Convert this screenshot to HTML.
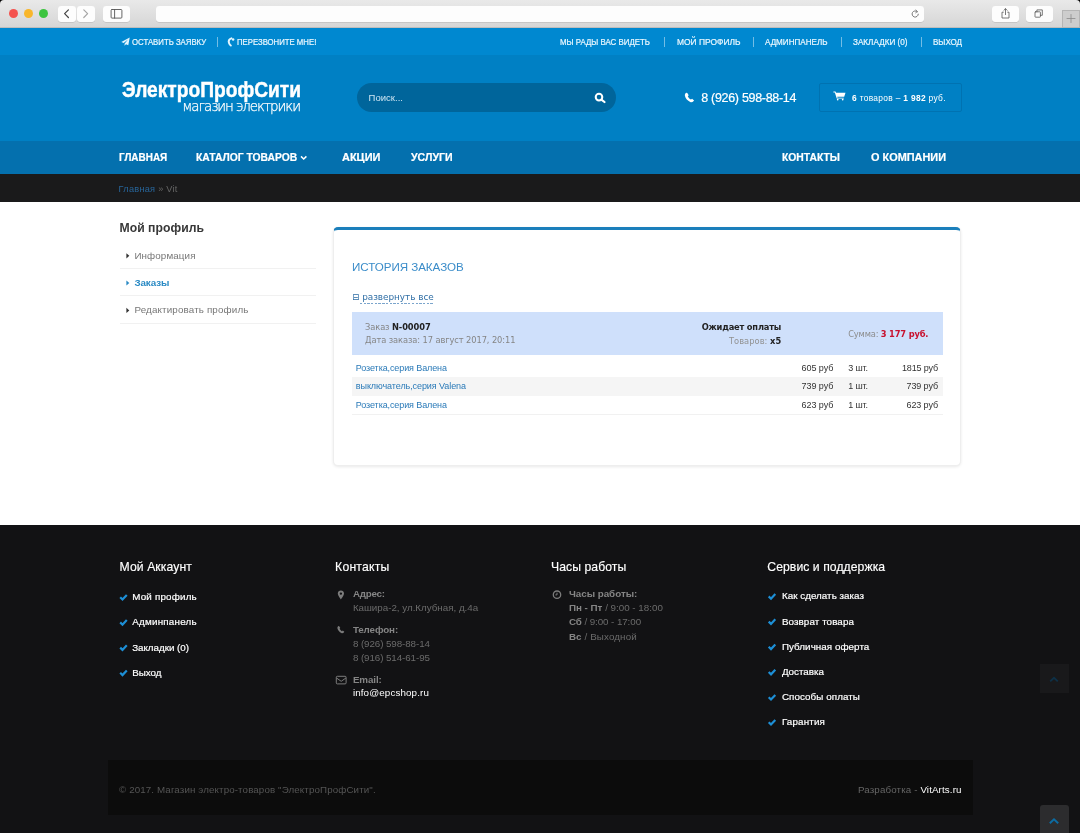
<!DOCTYPE html>
<html lang="ru">
<head>
<meta charset="utf-8">
<title>ЭлектроПрофСити — История заказов</title>
<style>
html,body{margin:0;padding:0}
body{width:1080px;height:833px;overflow:hidden;position:relative;background:#121214;font-family:"Liberation Sans","DejaVu Sans",sans-serif}
.a{position:absolute}
.t{position:absolute;white-space:nowrap;line-height:20px;height:20px}
.t b{font-weight:700}
#txt{position:absolute;left:0;top:0;width:1080px;height:833px;will-change:transform}
svg{position:absolute;overflow:visible}
/* browser chrome */
#chrome{left:0;top:0;width:1080px;height:28px;background:#000}
#chrome .bar{left:0;top:0;width:1080px;height:27.5px;border-radius:4px 4px 0 0;background:linear-gradient(#e9e9e9,#d6d6d6);border-bottom:0.5px solid #bdbdbd;box-sizing:border-box}
.btn{position:absolute;top:6px;height:15.5px;background:#fdfdfd;border-radius:3px;box-shadow:0 0.5px 0.5px rgba(0,0,0,.18)}
.dot{position:absolute;top:9px;width:9px;height:9px;border-radius:50%}
/* page bands */
#topbar{left:0;top:27.5px;width:1080px;height:27px;background:#0088d0}
#header{left:0;top:54.5px;width:1080px;height:86.5px;background:#0080c4}
#nav{left:0;top:140.6px;width:1080px;height:33.8px;background:#0470ae}
#crumb{left:0;top:174.2px;width:1080px;height:27.4px;background:#1a1a1b}
#content{left:0;top:201.5px;width:1080px;height:323.7px;background:#fff}
#footer{left:0;top:525.2px;width:1080px;height:308px;background:#121214}
#copy{left:108px;top:760px;width:864.6px;height:55px;background:#0c0c0c}
.sep{position:absolute;top:36.5px;width:1px;height:10px;background:rgba(255,255,255,.45)}
#search{left:356.8px;top:82.5px;width:259px;height:29.8px;border-radius:15px;background:#00659b}
#cart{left:818.6px;top:82.5px;width:143px;height:29.7px;box-sizing:border-box;border:1px solid #0072b1;border-radius:2px}
.line{position:absolute;left:119.5px;width:196px;height:1px;background:#f1f1f1}
#panel{left:333px;top:227px;width:628px;height:238.8px;box-sizing:border-box;background:#fff;border:1px solid #eeeeee;border-top:3px solid #1b7fbb;border-radius:5px;box-shadow:0 1px 3px rgba(0,0,0,.09)}
#ohead{left:352px;top:311.6px;width:590.8px;height:43.5px;background:#cfe0fb}
.row{position:absolute;left:352px;width:590.8px;height:18.6px}
.top1{left:1039.5px;top:664px;width:29px;height:29.3px;background:#19191b}
.top2{left:1039.5px;top:804.5px;width:29px;height:30px;background:#2c2c2e;border-radius:3px 3px 0 0}
</style>
</head>
<body>
<!-- ===== browser window chrome ===== -->
<div id="chrome" class="a">
  <div class="bar a"></div>
  <div class="dot" style="left:9.3px;background:#f4534f"></div>
  <div class="dot" style="left:23.9px;background:#f8b62b"></div>
  <div class="dot" style="left:39.2px;background:#3cc43f"></div>
  <div class="btn" style="left:58px;width:17.5px"></div>
  <div class="btn" style="left:76.5px;width:18px"></div>
  <div class="btn" style="left:103px;width:27px"></div>
  <div class="btn" style="left:156px;width:768px"></div>
  <div class="btn" style="left:992px;width:27px"></div>
  <div class="btn" style="left:1025.5px;width:27px"></div>
  <div class="a" style="left:1062px;top:9.5px;width:18px;height:18px;background:#cdcdcd;border:0.5px solid #b5b5b5;box-sizing:border-box"></div>
  <svg width="1080" height="28" viewBox="0 0 1080 28" fill="none" stroke="#555" stroke-width="0.9" stroke-linecap="round" stroke-linejoin="round">
    <path d="M68.4 9.9 L64.6 13.7 L68.4 17.5" stroke="#444" stroke-width="1.2"/>
    <path d="M83.8 9.9 L87.6 13.7 L83.8 17.5" stroke="#a5a5a5" stroke-width="1.2"/>
    <rect x="111.1" y="9.5" width="10.8" height="8.6" rx="0.9"/><path d="M114.6 9.5 V18.1"/>
    <path d="M917.2 11.6 A3.1 3.1 0 1 0 918.3 14.2" stroke="#666"/><path d="M915.9 9.9 L917.5 11.7 L915.6 12.9" stroke="#666" stroke-width="0.7"/>
    <path d="M1003.3 12.2 H1002 V18 H1009 V12.2 H1007.7 M1005.5 14.6 V8.8 M1003.9 10.3 L1005.5 8.7 L1007.1 10.3" stroke-width="0.8"/>
    <rect x="1035" y="11.8" width="5.4" height="5.4" rx="0.6" stroke-width="0.8"/><path d="M1036.9 11.8 V9.9 H1042.3 V15.3 H1040.4" stroke-width="0.8"/>
    <path d="M1067 18.5 H1075 M1071 14.5 V22.5" stroke="#8a8a8a" stroke-width="0.8"/>
  </svg>
</div>

<!-- ===== site header ===== -->
<div id="topbar" class="a"></div>
<div id="header" class="a"></div>
<div id="nav" class="a"></div>
<div id="crumb" class="a"></div>
<div id="content" class="a"></div>
<div id="footer" class="a"></div>
<div id="copy" class="a"></div>

<div class="sep" style="left:217px"></div>
<div class="sep" style="left:663.5px"></div>
<div class="sep" style="left:753px"></div>
<div class="sep" style="left:841px"></div>
<div class="sep" style="left:921px"></div>

<div id="search" class="a"></div>
<div id="cart" class="a"></div>

<!-- sidebar lines -->
<div class="line" style="top:268.1px"></div>
<div class="line" style="top:295.1px"></div>
<div class="line" style="top:322.7px"></div>

<!-- orders panel -->
<div id="panel" class="a"></div>
<div id="ohead" class="a"></div>
<div class="row" style="top:376.7px;height:19.1px;background:#f5f5f5"></div>
<div class="a" style="left:352px;top:413.8px;width:590.8px;height:1px;background:#f1f1f1"></div>
<div class="a" style="left:359.6px;top:302.8px;width:74.4px;height:1px;background:repeating-linear-gradient(90deg,#7ba5cc 0 2.3px,transparent 2.3px 3.7px)"></div>

<div class="a top1"></div>
<div class="a top2"></div>

<!-- ===== icons ===== -->
<svg width="1080" height="833" viewBox="0 0 1080 833" style="left:0;top:0">
  <!-- paper plane -->
  <path d="M129.7 37.6 L121.3 41.9 L123.7 43.1 L127.9 39.5 L124.6 43.7 L124.5 45.7 L126 44.3 L128.3 45.2 Z" fill="#e2f5fe"/>
  <!-- phone (callback) -->
  <path d="M231.4 38.4 C229.2 39.2 228.3 41 229 43 C229.4 44.2 230 45 230.8 45.5" fill="none" stroke="#e2f5fe" stroke-width="2" stroke-linecap="round"/>
  <circle cx="233.1" cy="39.4" r="1.25" fill="#e2f5fe"/>
  <!-- search magnifier -->
  <circle cx="599" cy="97.1" r="3.3" fill="none" stroke="#fff" stroke-width="2"/>
  <path d="M601.7 99.8 L604.5 102" stroke="#fff" stroke-width="2.2" stroke-linecap="round"/>
  <!-- header phone -->
  <path d="M686.2 92.800 c-.9.700-1.500 1.800-1.300 3 .6 2.800 2.700 5 5.300 6.200 1.100.5 2.400.2 3.200-.7 l.7-.9 -2-1.600 -1.100.8 c-1.500-.700-2.600-1.900-3.200-3.400 l.9-1 -1.400-2.200 z" fill="#fff"/>
  <!-- cart -->
  <path d="M833.4 91.6 h2.1 l.5 1.2 h9.5 l-1.3 4 h-7 l.25 .9 h6.4 v.9 h-7.1 l-1.9 -6.1 h-1.45 z" fill="#fff"/>
  <circle cx="837.7" cy="99.6" r=".85" fill="#fff"/><circle cx="842.7" cy="99.6" r=".85" fill="#fff"/>
  <!-- nav chevron -->
  <path d="M301 156.400 L303.700 159 L306.400 156.400" fill="none" stroke="#fff" stroke-width="1.500"/>
  <!-- sidebar carets -->
  <path d="M126.400 253.200 L129.300 255.800 L126.400 258.400 Z" fill="#333"/>
  <path d="M126.400 280.400 L129.300 283 L126.400 285.600 Z" fill="#2a8ac4"/>
  <path d="M126.400 307.800 L129.300 310.400 L126.400 313 Z" fill="#333"/>
  <!-- footer checks -->
  <g fill="none" stroke="#1d8fd6" stroke-width="2.2">
    <path d="M120.200 597.200 l2.300 2.300 4.300-4.600"/>
    <path d="M120.200 622.400 l2.300 2.300 4.300-4.600"/>
    <path d="M120.200 647.600 l2.300 2.300 4.300-4.600"/>
    <path d="M120.200 672.800 l2.300 2.300 4.300-4.600"/>
    <path d="M768.700 596.400 l2.300 2.300 4.300-4.600"/>
    <path d="M768.700 621.600 l2.300 2.300 4.300-4.600"/>
    <path d="M768.700 646.800 l2.300 2.300 4.300-4.600"/>
    <path d="M768.700 672 l2.300 2.300 4.300-4.600"/>
    <path d="M768.700 697.200 l2.300 2.300 4.300-4.600"/>
    <path d="M768.700 722.200 l2.300 2.300 4.300-4.600"/>
  </g>
  <!-- contact icons -->
  <path d="M340.900 590.600 c-1.800 0-3.100 1.300-3.100 3 0 2 3.100 5.900 3.100 5.900 s3.100-3.900 3.100-5.900 c0-1.700-1.300-3-3.100-3 z m0 4.200 a1.200 1.200 0 1 1 0-2.400 a1.200 1.200 0 0 1 0 2.400 z" fill="#7c7c7c" fill-rule="evenodd"/>
  <path d="M338.400 626 c-.7.600-1.100 1.400-1 2.300 .5 2.100 2 3.800 4 4.700 .9.400 1.800.1 2.400-.5 l.5-.7 -1.500-1.200 -.8.600 c-1.100-.5-2-1.400-2.400-2.600 l.7-.7 -1.100-1.700 z" fill="#7c7c7c"/>
  <g fill="none" stroke="#7c7c7c" stroke-width="1"><rect x="336.300" y="676.300" width="9.800" height="7.600" rx="1"/><path d="M336.500 678 l4.700 3.300 4.700-3.300"/></g>
  <g fill="none" stroke="#7c7c7c" stroke-width="1.3"><circle cx="557" cy="594.7" r="3.7"/><path d="M557 592.700 v2.200 h-1.600" stroke-width="1"/></g>
  <!-- scroll-top chevrons -->
  <path d="M1050.200 681.400 L1054 677.800 L1057.800 681.400" fill="none" stroke="#0e3046" stroke-width="1.9"/>
  <path d="M1049.800 823.300 L1054 819.300 L1058.200 823.300" fill="none" stroke="#0c6ba2" stroke-width="2"/>
</svg>

<!-- ===== text ===== -->
<div id="txt">
<span class="t" style='left:132.0px;top:31.7px;font:400 8.3px/20px "Liberation Sans", "DejaVu Sans", sans-serif;color:#e9f7fe;transform:scaleX(0.9381);transform-origin:0 50%;-webkit-text-stroke:0.2px #e9f7fe;'>ОСТАВИТЬ ЗАЯВКУ</span>
<span class="t" style='left:236.7px;top:31.7px;font:400 8.3px/20px "Liberation Sans", "DejaVu Sans", sans-serif;color:#e9f7fe;transform:scaleX(0.9360);transform-origin:0 50%;-webkit-text-stroke:0.2px #e9f7fe;'>ПЕРЕЗВОНИТЕ МНЕ!</span>
<span class="t" style='left:560.0px;top:31.7px;font:400 8.3px/20px "Liberation Sans", "DejaVu Sans", sans-serif;color:#e9f7fe;transform:scaleX(0.9503);transform-origin:0 50%;-webkit-text-stroke:0.2px #e9f7fe;'>МЫ РАДЫ ВАС ВИДЕТЬ</span>
<span class="t" style='left:676.5px;top:31.7px;font:400 8.3px/20px "Liberation Sans", "DejaVu Sans", sans-serif;color:#e9f7fe;transform:scaleX(1.0147);transform-origin:0 50%;-webkit-text-stroke:0.2px #e9f7fe;'>МОЙ ПРОФИЛЬ</span>
<span class="t" style='left:765.0px;top:31.7px;font:400 8.3px/20px "Liberation Sans", "DejaVu Sans", sans-serif;color:#e9f7fe;transform:scaleX(0.9732);transform-origin:0 50%;-webkit-text-stroke:0.2px #e9f7fe;'>АДМИНПАНЕЛЬ</span>
<span class="t" style='left:853.0px;top:31.7px;font:400 8.3px/20px "Liberation Sans", "DejaVu Sans", sans-serif;color:#e9f7fe;transform:scaleX(0.9820);transform-origin:0 50%;-webkit-text-stroke:0.2px #e9f7fe;'>ЗАКЛАДКИ (0)</span>
<span class="t" style='left:932.5px;top:31.7px;font:400 8.3px/20px "Liberation Sans", "DejaVu Sans", sans-serif;color:#e9f7fe;transform:scaleX(0.9657);transform-origin:0 50%;-webkit-text-stroke:0.2px #e9f7fe;'>ВЫХОД</span>
<span class="t" style='left:122.0px;top:79.9px;font:700 22px/20px "Liberation Sans", "DejaVu Sans", sans-serif;color:#fff;transform:scaleX(0.8717);transform-origin:0 50%;-webkit-text-stroke:0.45px #fff;'>ЭлектроПрофСити</span>
<span class="t" style='left:182.3px;top:96.6px;font:400 13.4px/20px "DejaVu Sans Light", "DejaVu Sans", sans-serif;color:#fff;letter-spacing:-1.063px;-webkit-text-stroke:0.25px #fff;'>магазин электрики</span>
<span class="t" style='left:368.6px;top:87.6px;font:400 9.5px/20px "Liberation Sans", "DejaVu Sans", sans-serif;color:#cfe6f3;letter-spacing:0.021px;'>Поиск...</span>
<span class="t" style='left:701.3px;top:87.8px;font:400 12.5px/20px "Liberation Sans", "DejaVu Sans", sans-serif;color:#fff;letter-spacing:-0.311px;-webkit-text-stroke:0.2px #fff;'>8 (926) 598-88-14</span>
<span class="t" style='left:852.0px;top:87.5px;font:400 8.4px/20px "Liberation Sans", "DejaVu Sans", sans-serif;color:#fff;letter-spacing:0.321px;'><b>6</b> товаров – <b>1 982</b> руб.</span>
<span class="t" style='left:119.4px;top:147.3px;font:700 10.5px/20px "Liberation Sans", "DejaVu Sans", sans-serif;color:#fff;transform:scaleX(0.9463);transform-origin:0 50%;-webkit-text-stroke:0.2px #fff;'>ГЛАВНАЯ</span>
<span class="t" style='left:195.7px;top:147.3px;font:700 10.5px/20px "Liberation Sans", "DejaVu Sans", sans-serif;color:#fff;transform:scaleX(0.9842);transform-origin:0 50%;-webkit-text-stroke:0.2px #fff;'>КАТАЛОГ ТОВАРОВ</span>
<span class="t" style='left:342.0px;top:147.3px;font:700 10.5px/20px "Liberation Sans", "DejaVu Sans", sans-serif;color:#fff;transform:scaleX(1.0445);transform-origin:0 50%;-webkit-text-stroke:0.2px #fff;'>АКЦИИ</span>
<span class="t" style='left:411.4px;top:147.3px;font:700 10.5px/20px "Liberation Sans", "DejaVu Sans", sans-serif;color:#fff;transform:scaleX(1.0081);transform-origin:0 50%;-webkit-text-stroke:0.2px #fff;'>УСЛУГИ</span>
<span class="t" style='left:781.5px;top:147.3px;font:700 10.5px/20px "Liberation Sans", "DejaVu Sans", sans-serif;color:#fff;transform:scaleX(0.9854);transform-origin:0 50%;-webkit-text-stroke:0.2px #fff;'>КОНТАКТЫ</span>
<span class="t" style='left:871.0px;top:147.3px;font:700 10.5px/20px "Liberation Sans", "DejaVu Sans", sans-serif;color:#fff;transform:scaleX(1.0385);transform-origin:0 50%;-webkit-text-stroke:0.2px #fff;'>О КОМПАНИИ</span>
<span class="t" style='left:118.6px;top:179.0px;font:400 9.2px/20px "Liberation Sans", "DejaVu Sans", sans-serif;color:#666;letter-spacing:0.254px;'><span style="color:#27659a">Главная</span> » Vit</span>
<span class="t" style='left:119.5px;top:217.6px;font:700 12.2px/20px "Liberation Sans", "DejaVu Sans", sans-serif;color:#383838;letter-spacing:0.037px;'>Мой профиль</span>
<span class="t" style='left:134.4px;top:245.6px;font:400 9.8px/20px "Liberation Sans", "DejaVu Sans", sans-serif;color:#777;letter-spacing:0.124px;'>Информация</span>
<span class="t" style='left:134.4px;top:272.8px;font:700 9.8px/20px "Liberation Sans", "DejaVu Sans", sans-serif;color:#2a8ac4;letter-spacing:-0.079px;'>Заказы</span>
<span class="t" style='left:134.4px;top:300.2px;font:400 9.8px/20px "Liberation Sans", "DejaVu Sans", sans-serif;color:#777;letter-spacing:0.152px;'>Редактировать профиль</span>
<span class="t" style='left:352.0px;top:257.0px;font:400 11.6px/20px "Liberation Sans", "DejaVu Sans", sans-serif;color:#3a8cc9;letter-spacing:-0.042px;'>ИСТОРИЯ ЗАКАЗОВ</span>
<span class="t" style='left:352.0px;top:287.0px;font:400 8.9px/20px "DejaVu Sans", "Liberation Sans", sans-serif;color:#2f6ea5;letter-spacing:-0.036px;'>⊟ развернуть все</span>
<span class="t" style='left:365.0px;top:316.7px;font:400 8.3px/20px "DejaVu Sans", "Liberation Sans", sans-serif;color:#858585;letter-spacing:-0.094px;'>Заказ <b style="color:#222">N-00007</b></span>
<span class="t" style='left:365.0px;top:330.2px;font:400 8.3px/20px "DejaVu Sans", "Liberation Sans", sans-serif;color:#858585;letter-spacing:-0.089px;'>Дата заказа: 17 август 2017, 20:11</span>
<span class="t" style='left:701.7px;top:316.7px;font:700 8.3px/20px "DejaVu Sans", "Liberation Sans", sans-serif;color:#222;letter-spacing:-0.198px;'>Ожидает оплаты</span>
<span class="t" style='left:728.9px;top:330.5px;font:400 8.3px/20px "DejaVu Sans", "Liberation Sans", sans-serif;color:#929292;letter-spacing:0.048px;'>Товаров: <b style="color:#222">x5</b></span>
<span class="t" style='left:848.2px;top:323.7px;font:400 8.3px/20px "DejaVu Sans", "Liberation Sans", sans-serif;color:#8c8c8c;letter-spacing:-0.164px;'>Сумма: <b style="color:#c8102e">3 177 руб.</b></span>
<span class="t" style='left:355.8px;top:358.0px;font:400 9px/20px "Liberation Sans", "DejaVu Sans", sans-serif;color:#2a7ab8;letter-spacing:-0.104px;'>Розетка,серия Валена</span>
<span class="t" style='left:801.5px;top:358.0px;font:400 9px/20px "Liberation Sans", "DejaVu Sans", sans-serif;color:#333;letter-spacing:-0.048px;'>605 руб</span>
<span class="t" style='left:848.2px;top:358.0px;font:400 9px/20px "Liberation Sans", "DejaVu Sans", sans-serif;color:#333;letter-spacing:-0.140px;'>3 шт.</span>
<span class="t" style='left:902.0px;top:358.0px;font:400 9px/20px "Liberation Sans", "DejaVu Sans", sans-serif;color:#333;letter-spacing:-0.155px;'>1815 руб</span>
<span class="t" style='left:355.8px;top:376.4px;font:400 9px/20px "Liberation Sans", "DejaVu Sans", sans-serif;color:#2a7ab8;letter-spacing:-0.080px;'>выключатель,серия Valena</span>
<span class="t" style='left:801.5px;top:376.4px;font:400 9px/20px "Liberation Sans", "DejaVu Sans", sans-serif;color:#333;letter-spacing:-0.048px;'>739 руб</span>
<span class="t" style='left:848.2px;top:376.4px;font:400 9px/20px "Liberation Sans", "DejaVu Sans", sans-serif;color:#333;letter-spacing:-0.140px;'>1 шт.</span>
<span class="t" style='left:906.5px;top:376.4px;font:400 9px/20px "Liberation Sans", "DejaVu Sans", sans-serif;color:#333;letter-spacing:-0.098px;'>739 руб</span>
<span class="t" style='left:355.8px;top:395.0px;font:400 9px/20px "Liberation Sans", "DejaVu Sans", sans-serif;color:#2a7ab8;letter-spacing:-0.104px;'>Розетка,серия Валена</span>
<span class="t" style='left:801.5px;top:395.0px;font:400 9px/20px "Liberation Sans", "DejaVu Sans", sans-serif;color:#333;letter-spacing:-0.048px;'>623 руб</span>
<span class="t" style='left:848.2px;top:395.0px;font:400 9px/20px "Liberation Sans", "DejaVu Sans", sans-serif;color:#333;letter-spacing:-0.140px;'>1 шт.</span>
<span class="t" style='left:906.5px;top:395.0px;font:400 9px/20px "Liberation Sans", "DejaVu Sans", sans-serif;color:#333;letter-spacing:-0.098px;'>623 руб</span>
<span class="t" style='left:119.5px;top:556.8px;font:400 12.2px/20px "Liberation Sans", "DejaVu Sans", sans-serif;color:#fff;letter-spacing:0.093px;-webkit-text-stroke:0.15px #fff;'>Мой Аккаунт</span>
<span class="t" style='left:335.1px;top:556.8px;font:400 12.2px/20px "Liberation Sans", "DejaVu Sans", sans-serif;color:#fff;letter-spacing:0.221px;-webkit-text-stroke:0.15px #fff;'>Контакты</span>
<span class="t" style='left:551.1px;top:556.8px;font:400 12.2px/20px "Liberation Sans", "DejaVu Sans", sans-serif;color:#fff;letter-spacing:0.057px;-webkit-text-stroke:0.15px #fff;'>Часы работы</span>
<span class="t" style='left:767.3px;top:556.8px;font:400 12.2px/20px "Liberation Sans", "DejaVu Sans", sans-serif;color:#fff;letter-spacing:0.063px;-webkit-text-stroke:0.15px #fff;'>Сервис и поддержка</span>
<span class="t" style='left:132.2px;top:587.2px;font:400 9.8px/20px "Liberation Sans", "DejaVu Sans", sans-serif;color:#fff;letter-spacing:0.202px;-webkit-text-stroke:0.2px #fff;'>Мой профиль</span>
<span class="t" style='left:132.2px;top:612.4px;font:400 9.8px/20px "Liberation Sans", "DejaVu Sans", sans-serif;color:#fff;letter-spacing:0.252px;-webkit-text-stroke:0.2px #fff;'>Админпанель</span>
<span class="t" style='left:132.2px;top:637.6px;font:400 9.8px/20px "Liberation Sans", "DejaVu Sans", sans-serif;color:#fff;letter-spacing:-0.028px;-webkit-text-stroke:0.2px #fff;'>Закладки (0)</span>
<span class="t" style='left:132.2px;top:662.8px;font:400 9.8px/20px "Liberation Sans", "DejaVu Sans", sans-serif;color:#fff;letter-spacing:-0.007px;-webkit-text-stroke:0.2px #fff;'>Выход</span>
<span class="t" style='left:781.9px;top:586.4px;font:400 9.8px/20px "Liberation Sans", "DejaVu Sans", sans-serif;color:#fff;letter-spacing:0.041px;-webkit-text-stroke:0.2px #fff;'>Как сделать заказ</span>
<span class="t" style='left:781.9px;top:611.6px;font:400 9.8px/20px "Liberation Sans", "DejaVu Sans", sans-serif;color:#fff;letter-spacing:0.097px;-webkit-text-stroke:0.2px #fff;'>Возврат товара</span>
<span class="t" style='left:781.9px;top:636.8px;font:400 9.8px/20px "Liberation Sans", "DejaVu Sans", sans-serif;color:#fff;letter-spacing:0.065px;-webkit-text-stroke:0.2px #fff;'>Публичная оферта</span>
<span class="t" style='left:781.9px;top:662.0px;font:400 9.8px/20px "Liberation Sans", "DejaVu Sans", sans-serif;color:#fff;letter-spacing:-0.011px;-webkit-text-stroke:0.2px #fff;'>Доставка</span>
<span class="t" style='left:781.9px;top:687.2px;font:400 9.8px/20px "Liberation Sans", "DejaVu Sans", sans-serif;color:#fff;letter-spacing:0.084px;-webkit-text-stroke:0.2px #fff;'>Способы оплаты</span>
<span class="t" style='left:781.9px;top:712.2px;font:400 9.8px/20px "Liberation Sans", "DejaVu Sans", sans-serif;color:#fff;letter-spacing:0.174px;-webkit-text-stroke:0.2px #fff;'>Гарантия</span>
<span class="t" style='left:352.9px;top:584.4px;font:700 9.8px/20px "Liberation Sans", "DejaVu Sans", sans-serif;color:#858585;letter-spacing:-0.242px;'>Адрес:</span>
<span class="t" style='left:352.9px;top:598.4px;font:400 9.8px/20px "Liberation Sans", "DejaVu Sans", sans-serif;color:#6b6b6b;letter-spacing:-0.014px;'>Кашира-2, ул.Клубная, д.4а</span>
<span class="t" style='left:352.9px;top:620.0px;font:700 9.8px/20px "Liberation Sans", "DejaVu Sans", sans-serif;color:#858585;letter-spacing:-0.116px;'>Телефон:</span>
<span class="t" style='left:352.9px;top:634.0px;font:400 9.8px/20px "Liberation Sans", "DejaVu Sans", sans-serif;color:#6b6b6b;letter-spacing:-0.084px;'>8 (926) 598-88-14</span>
<span class="t" style='left:352.9px;top:647.8px;font:400 9.8px/20px "Liberation Sans", "DejaVu Sans", sans-serif;color:#6b6b6b;letter-spacing:-0.084px;'>8 (916) 514-61-95</span>
<span class="t" style='left:352.9px;top:669.6px;font:700 9.8px/20px "Liberation Sans", "DejaVu Sans", sans-serif;color:#858585;letter-spacing:-0.101px;'>Email:</span>
<span class="t" style='left:352.9px;top:683.3px;font:400 9.8px/20px "Liberation Sans", "DejaVu Sans", sans-serif;color:#fff;letter-spacing:0.127px;'>info@epcshop.ru</span>
<span class="t" style='left:568.9px;top:584.4px;font:700 9.8px/20px "Liberation Sans", "DejaVu Sans", sans-serif;color:#858585;letter-spacing:-0.012px;'>Часы работы:</span>
<span class="t" style='left:568.9px;top:598.4px;font:400 9.8px/20px "Liberation Sans", "DejaVu Sans", sans-serif;color:#6b6b6b;letter-spacing:0.001px;'><b style="color:#858585">Пн - Пт</b> / 9:00 - 18:00</span>
<span class="t" style='left:568.9px;top:612.3px;font:400 9.8px/20px "Liberation Sans", "DejaVu Sans", sans-serif;color:#6b6b6b;letter-spacing:-0.079px;'><b style="color:#858585">Сб</b> / 9:00 - 17:00</span>
<span class="t" style='left:568.9px;top:626.6px;font:400 9.8px/20px "Liberation Sans", "DejaVu Sans", sans-serif;color:#6b6b6b;letter-spacing:0.121px;'><b style="color:#858585">Вс</b> / Выходной</span>
<span class="t" style='left:119.0px;top:780.3px;font:400 9.75px/20px "Liberation Sans", "DejaVu Sans", sans-serif;color:#555;letter-spacing:0.124px;'>© 2017. Магазин электро-товаров "ЭлектроПрофСити".</span>
<span class="t" style='left:858.0px;top:780.3px;font:400 9.75px/20px "Liberation Sans", "DejaVu Sans", sans-serif;color:#666;letter-spacing:0.134px;'>Разработка - <span style="color:#fff">VitArts.ru</span></span>
</div>
</body>
</html>
